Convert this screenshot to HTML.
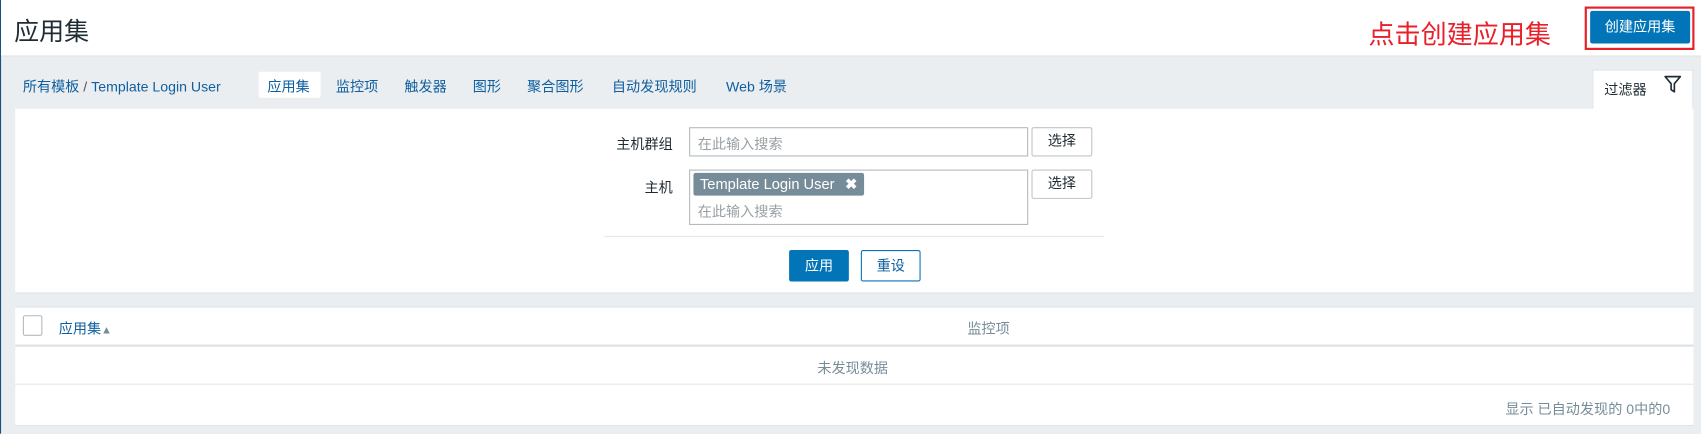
<!DOCTYPE html>
<html><head><meta charset="utf-8"><style>
*{margin:0;padding:0;box-sizing:border-box}
html,body{width:1701px;height:433px;overflow:hidden;background:#ebeef0}
#w{position:absolute;left:0;top:0;width:1565px;height:399px;transform:scale(1.08690);transform-origin:0 0;font-family:"Liberation Sans","Noto Sans CJK SC",sans-serif;font-size:13px;color:#1f2c33;background:#ebeef0;border-left:1px solid #1d4f7a}
.a{position:absolute;white-space:nowrap}
.lk{color:#0f5fa0}
.inp{position:absolute;border:1px solid #b4b9bd;background:#fff}
.btn{position:absolute;border:1px solid #c0c4c7;background:#fff;border-radius:2px;text-align:center;line-height:24px;color:#1f2c33}
</style></head><body><div id="w">
<div class="a" style="left:0;top:0;width:1565px;height:52px;background:#fff;border-bottom:1px solid #dfe4e7"></div>
<div class="a" style="left:12px;top:10px;font-size:23px;color:#1f2c33">应用集</div>
<div class="a" style="left:1258px;top:12px;font-size:24px;color:#e8202a">点击创建应用集</div>
<div class="a" style="left:1457px;top:6px;width:101px;height:40px;border:2px solid #e8202a"></div>
<div class="a" style="left:1462px;top:10px;width:92px;height:30px;background:#0275b8;color:#fff;text-align:center;line-height:30px;font-size:13px;border-radius:2px">创建应用集</div>

<div class="a lk" style="left:20px;top:69px">所有模板 <span style="color:#555">/</span> Template Login User</div>
<div class="a" style="left:237px;top:66px;width:57px;height:24px;background:#fff;border-radius:2px"></div>
<div class="a lk" style="left:245px;top:69px">应用集</div>
<div class="a lk" style="left:308px;top:69px">监控项</div>
<div class="a lk" style="left:371px;top:69px">触发器</div>
<div class="a lk" style="left:434px;top:69px">图形</div>
<div class="a lk" style="left:484px;top:69px">聚合图形</div>
<div class="a lk" style="left:562px;top:69px">自动发现规则</div>
<div class="a lk" style="left:667px;top:69px">Web 场景</div>

<div class="a" style="left:1464px;top:64px;width:93px;height:40px;background:#fff;border:1px solid #dfe4e7;border-bottom:none"></div>
<div class="a" style="left:1475px;top:72px">过滤器</div>
<svg class="a" style="left:1530px;top:69px" width="16" height="17" viewBox="0 0 16 17"><path d="M1 1.5H15L9.5 8V15.5L6.5 13.5V8Z" fill="none" stroke="#1f2c33" stroke-width="1.5" stroke-linejoin="round"/></svg>

<div class="a" style="left:13px;top:100px;width:1544px;height:170px;background:#fff;border-bottom:1px solid #dfe4e7"></div>
<div class="a" style="left:566px;top:122px">主机群组</div>
<div class="inp" style="left:633px;top:117px;width:312px;height:27px"></div>
<div class="a" style="left:641px;top:122px;color:#9aa0a4">在此输入搜索</div>
<div class="btn" style="left:948px;top:117px;width:56px;height:27px">选择</div>
<div class="a" style="left:592px;top:162px">主机</div>
<div class="inp" style="left:633px;top:156px;width:312px;height:51px"></div>
<div class="a" style="left:637px;top:159px;width:157px;height:21px;background:#768d99;color:#fff;border-radius:2px;padding-left:6px;line-height:21px;font-size:13.5px">Template Login User <span style="margin-left:6px;font-weight:bold">✖</span></div>
<div class="a" style="left:641px;top:184px;color:#9aa0a4">在此输入搜索</div>
<div class="btn" style="left:948px;top:156px;width:56px;height:27px">选择</div>
<div class="a" style="left:555px;top:217px;width:460px;height:1px;background:#e5e8ea"></div>
<div class="a" style="left:725px;top:230px;width:55px;height:29px;background:#0275b8;color:#fff;text-align:center;line-height:29px;border-radius:2px">应用</div>
<div class="a" style="left:791px;top:230px;width:55px;height:29px;border:1px solid #0275b8;color:#0f5fa0;text-align:center;line-height:27px;border-radius:2px;background:#fff">重设</div>

<div class="a" style="left:13px;top:282px;width:1544px;height:110px;background:#fff;border-top:1px solid #dfe4e7;border-bottom:1px solid #dfe4e7"></div>
<div class="a" style="left:20px;top:290px;width:18px;height:19px;border:1px solid #b4b9bd;border-radius:2px"></div>
<div class="a lk" style="left:53px;top:292px">应用集<span style="font-size:10px;color:#768d99">▲</span></div>
<div class="a" style="left:889px;top:292px;color:#768d99">监控项</div>
<div class="a" style="left:13px;top:317px;width:1544px;height:2px;background:#dde1e4"></div>
<div class="a" style="left:751px;top:328px;color:#768d99">未发现数据</div>
<div class="a" style="left:13px;top:353px;width:1544px;height:1px;background:#e5e8ea"></div>
<div class="a" style="left:1384px;top:366px;color:#768d99">显示 已自动发现的 0中的0</div>
</div></body></html>
